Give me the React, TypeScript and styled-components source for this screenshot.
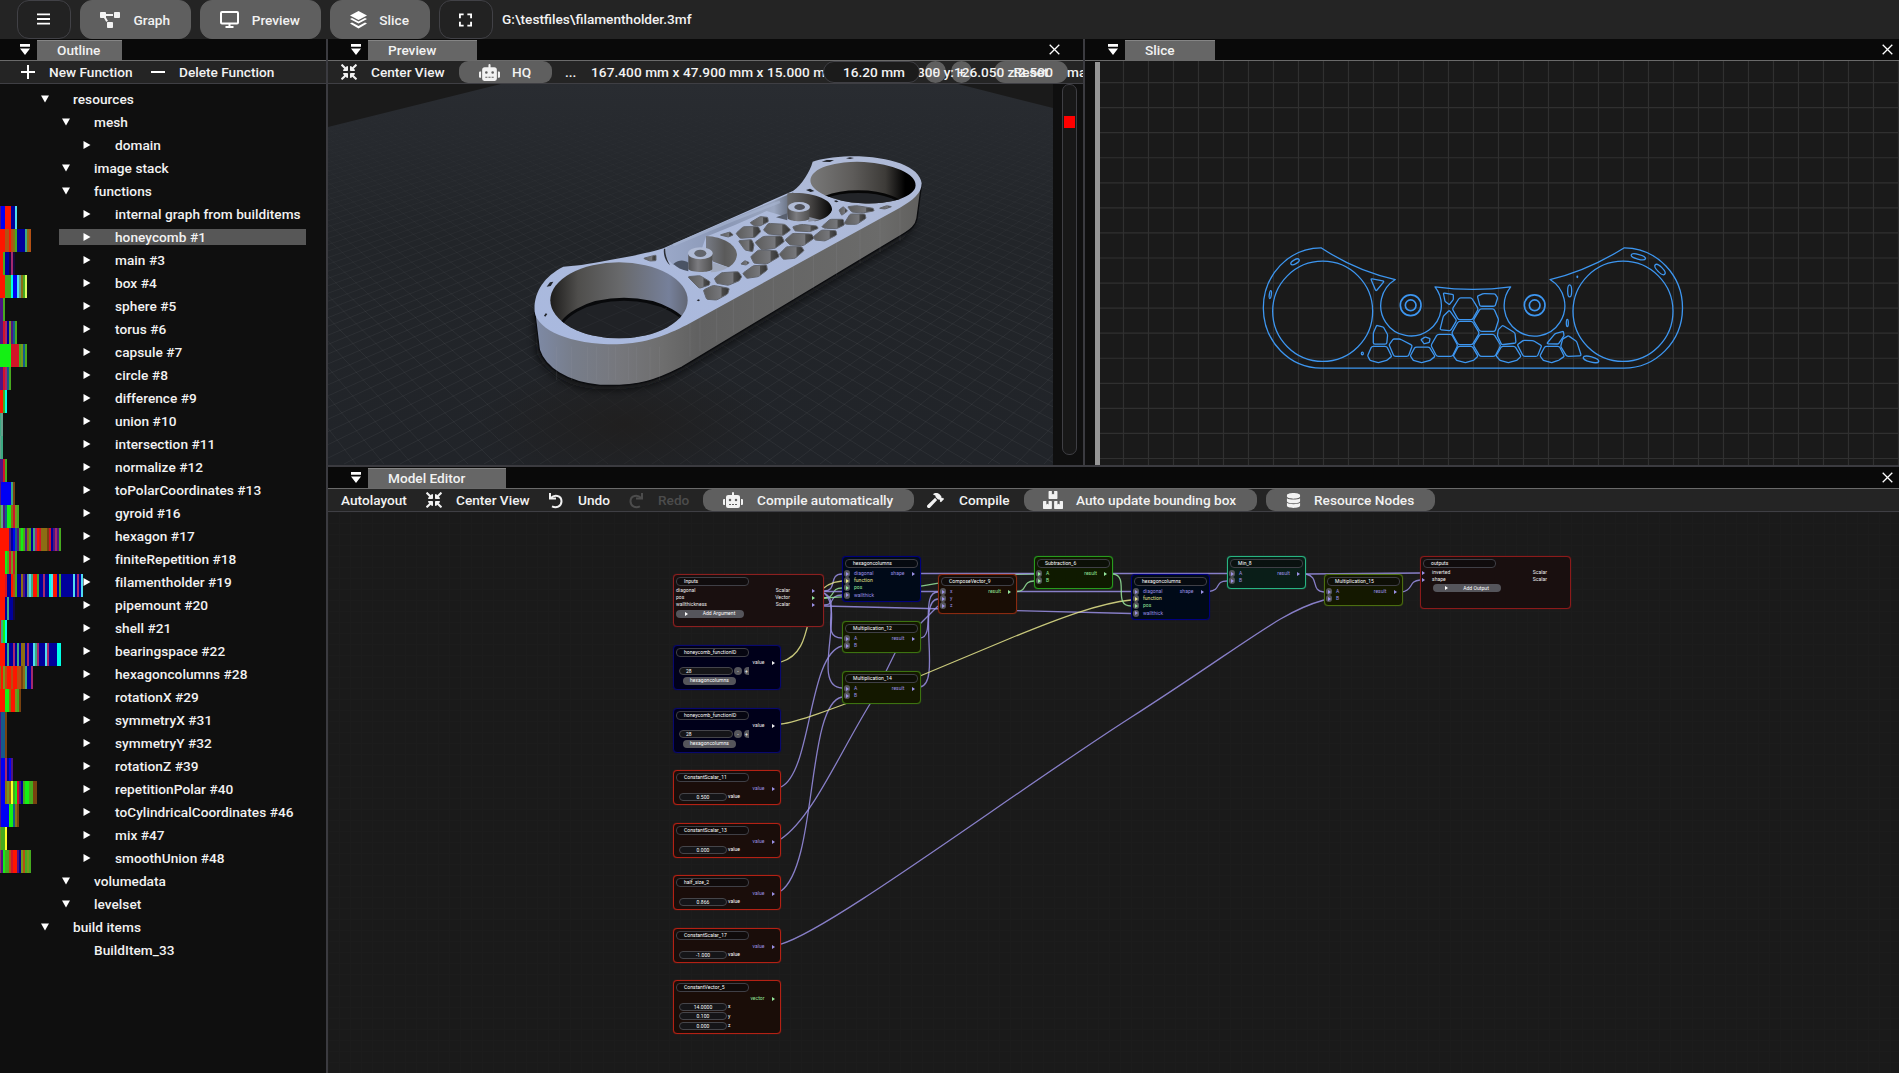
import React from 'react';
import styled, { createGlobalStyle } from 'styled-components';
import { FaRobot, FaHammer, FaBoxes, FaDatabase, FaCompressArrowsAlt, FaProjectDiagram } from 'react-icons/fa';

const GlobalStyle = createGlobalStyle`
  * { box-sizing: border-box; }
  body {
    margin: 0;
    background: #0f0f0f;
    color: #f2f2f2;
    font-family: Roboto, "Liberation Sans", sans-serif;
    font-size: 13.65px;
    font-weight: 500;
    letter-spacing: 0;
    overflow: hidden;
  }
`;

const App_ = styled.div`
  width: 1899px;
  height: 1073px;
  display: flex;
  flex-direction: column;
  overflow: hidden;
`;
const Header = styled.header`
  height: 39px;
  flex: none;
  display: flex;
  padding-left: 17px;
  gap: 9px;
  background: #242424;
`;
const HeaderButton = styled.button<{ $w: number; $filled?: boolean }>`
  width: ${p => p.$w}px;
  height: 39px;
  padding: 0 20px 0 19px;
  display: flex;
  align-items: center;
  justify-content: ${p => (p.$filled ? 'space-between' : 'center')};
  border: 1px solid ${p => (p.$filled ? '#5f5f5f' : '#414146')};
  border-radius: 12px;
  background: ${p => (p.$filled ? '#5f5f5f' : '#222')};
  color: #f2f2f2;
  font: inherit;
  letter-spacing: inherit;
`;
const FilePath = styled.span`
  line-height: 39px;
  white-space: nowrap;
`;
const Body = styled.div`
  flex: 1;
  min-height: 0;
  display: flex;
`;
const Sidebar = styled.aside`
  width: 328px;
  border-right: 2px solid #3b3b40;
  display: flex;
  flex-direction: column;
  background: #0f0f0f;
`;
const Main = styled.main`
  flex: 1;
  min-width: 0;
  display: flex;
  flex-direction: column;
`;
const TopPanels = styled.div`
  height: 428px;
  flex: none;
  display: flex;
  border-bottom: 2px solid #3b3b40;
`;
const Panel = styled.section<{ $w?: number; $split?: boolean }>`
  ${p => (p.$w ? `width: ${p.$w}px; flex: none;` : 'flex: 1; min-width: 0;')}
  min-height: 0;
  display: flex;
  flex-direction: column;
  border-right: ${p => (p.$split ? '2px solid #3b3b40' : 'none')};
`;
const TabBar = styled.div<{ $lead: number }>`
  height: 22px;
  flex: none;
  display: flex;
  align-items: flex-end;
  padding: 0 6px 0 ${p => p.$lead}px;
  background: #090909;
  border-bottom: 1px solid #6a6a6a;
`;
const DockIcon = styled.svg`
  width: 17px;
  height: 21px;
  flex: none;
  fill: #fff;
`;
const Tab = styled.div<{ $w: number }>`
  width: ${p => p.$w}px;
  height: 20px;
  padding-left: 20px;
  line-height: 19px;
  background: #666;
  border-top: 1px solid #858585;
`;
const TabClose = styled.svg<{ $inset?: number }>`
  width: 11px;
  height: 11px;
  margin: 0 ${p => p.$inset ?? 0}px 5px auto;
  stroke: #fff;
  stroke-width: 1.3;
`;
const Toolbar = styled.div`
  position: relative;
  height: 23px;
  flex: none;
  display: flex;
  align-items: center;
  background: #242424;
  border-bottom: 1px solid #3f3f44;
  white-space: nowrap;
  overflow: hidden;
`;
const ToolItem = styled.div<{ $w: number; $dim?: boolean; $pill?: boolean; $pad?: number; $gap?: number }>`
  width: ${p => p.$w}px;
  height: 22px;
  flex: none;
  display: flex;
  align-items: center;
  gap: ${p => p.$gap ?? 14}px;
  padding-left: ${p => p.$pad ?? 0}px;
  border-radius: 9px;
  background: ${p => (p.$pill ? '#5f5f5f' : 'transparent')};
  color: ${p => (p.$dim ? '#4c4c4c' : '#f2f2f2')};
  svg { flex: none; }
`;
const Dimensions = styled.span`
  letter-spacing: 0.06px;
`;
const Gap = styled.div<{ $w: number }>`
  width: ${p => p.$w}px;
  flex: none;
`;
const OverInput = styled.div`
  position: absolute;
  left: 495px;
  top: 0;
  width: 97px;
  height: 22px;
  z-index: 2;
  border: 1px solid #3f3f44;
  border-radius: 11px;
  background: #1b1b1b;
  line-height: 21px;
  padding-left: 19px;
`;
const OverPill = styled.div<{ $x: number; $w: number }>`
  position: absolute;
  left: ${p => p.$x}px;
  top: 0;
  width: ${p => p.$w}px;
  height: 22px;
  border-radius: 11px;
  background: #5f5f5f;
  line-height: 23px;
  text-align: center;
`;
const Coordinates = styled.div<{ $x: number }>`
  position: absolute;
  left: ${p => p.$x}px;
  line-height: 23px;
  z-index: 1;
`;
const Tree = styled.div`
  padding-top: 7px;
`;
const TreeRow = styled.div<{ $level: number }>`
  position: relative;
  height: 23px;
  padding: 0 20px 7px ${p => 38 + p.$level * 21}px;
`;
const TreeItem = styled.div<{ $selected?: boolean }>`
  height: 16px;
  margin-left: ${p => (p.$selected ? -21 : 0)}px;
  padding-left: ${p => (p.$selected ? 21 : 0)}px;
  display: flex;
  align-items: flex-start;
  line-height: 17px;
  letter-spacing: 0.04px;
  white-space: nowrap;
  background: ${p => (p.$selected ? '#575757' : 'transparent')};
`;
const Caret = styled.svg`
  width: 35px;
  height: 16px;
  flex: none;
  fill: #fff;
`;
const Signature = styled.div`
  position: absolute;
  left: -1px;
  top: 0;
  display: flex;
`;
const Stripe = styled.i<{ $c: string }>`
  width: 2px;
  height: 23px;
  background: ${p => p.$c};
`;
const PreviewBody = styled.div`
  flex: 1;
  min-height: 0;
  display: flex;
  background: #0f0f0f;
`;
const Scene = styled.svg`
  width: 725px;
  height: 381px;
  flex: none;
`;
const Slider = styled.div`
  width: 15px;
  height: 371px;
  margin-left: 9px;
  padding: 31px 1px 0;
  border: 1px solid #3f3f44;
  border-radius: 7px;
  background: #181818;
`;
const SliderThumb = styled.div`
  height: 12px;
  background: #f00;
`;
const SliceBody = styled.div`
  flex: 1;
  min-height: 0;
  display: flex;
  padding-left: 10px;
  background: #0f0f0f;
`;
const SliceEdge = styled.div`
  width: 5px;
  margin-top: 1px;
  background: #969696;
`;
const SliceView = styled.svg`
  flex: 1;
  height: 100%;
  background: #1a1a1a;
`;
const Canvas = styled.div`
  position: relative;
  flex: 1;
  overflow: hidden;
  background: #1a1a1a;
  background-image: linear-gradient(90deg, #1c1c1c 1px, transparent 1px), linear-gradient(#1c1c1c 1px, transparent 1px);
  background-size: 11px 11px;
`;
const Links = styled.svg`
  position: absolute;
  inset: 0;
  width: 1571px;
  height: 561px;
  fill: none;
  stroke-width: 1.3;
`;
const NodeBox = styled.div<{ $x: number; $y: number; $w: number; $h: number; $c: string; $bg: string }>`
  position: absolute;
  left: ${p => p.$x - 328}px;
  top: ${p => p.$y - 512}px;
  width: ${p => p.$w}px;
  height: ${p => p.$h}px;
  padding: 2px 2px 0;
  border: 1px solid ${p => p.$c};
  box-shadow: 0 0 1px ${p => p.$c};
  border-radius: 4px;
  background: ${p => p.$bg};
  font-size: 5px;
  font-weight: 400;
  line-height: 7px;
  letter-spacing: 0.05px;
  white-space: nowrap;
`;
const NodeTitle = styled.div<{ $w: number }>`
  width: ${p => p.$w}px;
  height: 9px;
  padding-left: 7px;
  border: 1px solid #3f3f46;
  border-radius: 4px;
  background: rgba(10, 10, 12, 0.6);
  color: #fff;
`;
const Port = styled.div<{ $c: string }>`
  display: flex;
  align-items: center;
  height: 7.2px;
  color: ${p => p.$c};
`;
const PortRows = styled.div<{ $top: number }>`
  margin-top: ${p => p.$top}px;
`;
const Pin = styled.span`
  width: 6px;
  height: 7px;
  margin: 0 4px 0 -1px;
  display: grid;
  place-items: center;
  border-radius: 3px;
  background: #55555a;
`;
const PinArrow = styled.span<{ $c: string }>`
  flex: none;
  border-left: 3px solid ${p => p.$c};
  border-top: 2px solid transparent;
  border-bottom: 2px solid transparent;
`;
const LeadArrow = styled(PinArrow)`
  margin: 0 7px 0 -1px;
`;
const PortOut = styled.span<{ $c: string; $right: number; $gap: number }>`
  margin-left: auto;
  margin-right: ${p => p.$right}px;
  display: flex;
  align-items: center;
  gap: ${p => p.$gap}px;
  color: ${p => p.$c};
`;
const NodeButton = styled.div<{ $x: number; $w: number }>`
  width: ${p => p.$w}px;
  height: 8px;
  margin: 1px 0 0 ${p => p.$x}px;
  display: flex;
  align-items: center;
  justify-content: center;
  gap: 15px;
  border-radius: 4px;
  background: #55555b;
  color: #fff;
`;
const FieldRow = styled.div`
  display: flex;
  align-items: center;
  height: 9.5px;
  padding-left: 3px;
  gap: 1px;
  color: #fff;
`;
const Field = styled.div<{ $w: number }>`
  width: ${p => p.$w}px;
  height: 8px;
  line-height: 6px;
  text-align: center;
  border: 1px solid #45454a;
  border-radius: 4px;
  background: #151518;
`;
const NarrowField = styled(Field)`
  text-align: left;
  padding-left: 6px;
`;
const Step = styled.span<{ $half?: boolean }>`
  width: ${p => (p.$half ? 5 : 8)}px;
  height: 8px;
  margin-left: ${p => (p.$half ? 1 : 0)}px;
  line-height: 8px;
  text-align: center;
  border-radius: ${p => (p.$half ? '4px 0 0 4px' : '4px')};
  background: #55555b;
`;

/* ---------- outline ---------- */

const palette: Record<string, string> = {
  r: '#ff1500', R: '#d21428', o: '#8c6e14', O: '#b45014', n: '#00009b', b: '#0000f5', p: '#501482',
  c: '#50dcf0', C: '#00ffe6', g: '#46aa1e', G: '#14f014', t: '#3caa82', m: '#a5286e', y: '#ffff28',
  Y: '#dcff64', l: '#78961e', w: '#78410f', k: '#64a08c', a: '#145a8c', d: '#140a3c',
};

type Item = [level: number, label: string, bars?: string];
const outline: Item[] = [
  [0, 'resources'], [1, 'mesh'], [2, 'domain'], [1, 'image stack'], [1, 'functions'],
  [2, 'internal graph from builditems', 'pbbrrrnnc'],
  [2, 'honeycomb #1', 'rrrOOrOognnnntoO'],
  [2, 'main #3', 'rrgnndmd'],
  [2, 'box #4', 'rrrgggCbbckogY'],
  [2, 'sphere #5', 'ppg'],
  [2, 'torus #6', 'ppRmnlpag'],
  [2, 'capsule #7', 'GGGGGGRRRRglag'],
  [2, 'circle #8', 'ppRmag'],
  [2, 'difference #9', 'rrgC'],
  [2, 'union #10', 'tk'],
  [2, 'intersection #11', 'kt'],
  [2, 'normalize #12', 'ppRg'],
  [2, 'toPolarCoordinates #13', 'pbbbbbtw'],
  [2, 'gyroid #16', 'gkpaGGoRlg'],
  [2, 'hexagon #17', 'rrrrrpnbapgGgpogntmrRooowRnpmpg'],
  [2, 'finiteRepetition #18', 'rrrGgRlRg'],
  [2, 'filamentholder #19', 'rrrRnnrOgnnopnkctrrgnnmnnCcrrngnnnnnncnmnc'],
  [2, 'pipemount #20', 'rrrntnnd'],
  [2, 'shell #21', 'RtGC'],
  [2, 'bearingspace #22', 'rrrntnnmntnoonmnnctmnnncmnnnnCC'],
  [2, 'hexagoncolumns #28', 'orlOrrOrrOOwotnnm'],
  [2, 'rotationX #29', 'rrrGGorrlgw'],
  [2, 'symmetryX #31', 'paaw'],
  [2, 'symmetryY #32', 'paaw'],
  [2, 'rotationZ #39', 'pbbmnbp'],
  [2, 'repetitionPolar #40', 'pbboloygGRpngGGggww'],
  [2, 'toCylindricalCoordinates #46', 'pbbbbGGaow'],
  [2, 'mix #47', 'lggy'],
  [2, 'smoothUnion #48', 'mpGggORrrpnlOglg'],
  [1, 'volumedata'], [1, 'levelset'], [0, 'build items'], [1, 'BuildItem_33'],
];

const OutlineRow = ({ item }: { item: Item }) => {
  const [level, label, bars] = item;
  const leaf = label === 'BuildItem_33';
  return (
    <TreeRow $level={level}>
      {bars && <Signature>{[...bars].map((b, i) => <Stripe key={i} $c={palette[b]} />)}</Signature>}
      <TreeItem $selected={label === 'honeycomb #1'}>
        <Caret viewBox="0 0 35 16">
          {!leaf && (level === 2 ? <path d="M3.500 4 10.500 8 3.500 12z" /> : <path d="M3 4.500H11L7 11.500z" />)}
        </Caret>
        {label}
      </TreeItem>
    </TreeRow>
  );
};

/* ---------- shared bits ---------- */

const Dock = () => (
  <DockIcon viewBox="0 0 17 21"><path d="M0 5h10v2.800H0zM0 9.500h10L5 16z" /></DockIcon>
);
const Close = ({ inset }: { inset?: number }) => (
  <TabClose $inset={inset} viewBox="0 0 11 11"><path d="M.7.7l9.600 9.600M10.300.7L.7 10.300" /></TabClose>
);
const UndoGlyph = ({ flip }: { flip?: boolean }) => (
  <svg width="16" height="17" viewBox="0 0 16 17" fill="none" stroke="currentColor" strokeWidth="2">
    <g transform={flip ? 'translate(16 0) scale(-1 1)' : undefined}>
      <path d="M2 1v5.500h6" />
      <path d="M3 6C6 2.500 13.500 2.800 13.500 9.300c0 5.500-5.500 7-9.500 5" />
    </g>
  </svg>
);

/* ---------- 3D preview ---------- */

const cells = [
  '563,440 600,437 630,455 628,465 598,475', '643,445 665,428 715,425 725,440 718,452 685,466 650,460',
  '610,480 640,466 688,475 683,492 650,510 620,508', '728,430 760,407 800,405 802,420 775,440 740,445',
  '752,380 775,360 830,362 838,380 800,402 762,400', '838,372 860,350 905,350 912,362 885,385 850,388',
  '715,332 755,329 762,345 758,365 735,360', '708,310 730,290 775,290 782,305 765,322 720,325',
  '765,337 790,319 845,318 853,335 825,355 785,360', '790,300 805,280 855,283 872,300 850,316 805,312',
  '855,330 878,310 935,312 942,325 910,347 870,345', '750,278 780,260 803,262 805,275 780,288 760,286',
  '878,290 905,283 950,288 955,295 930,305 885,303', '940,320 965,300 1008,302 1010,315 975,333 945,330',
  '965,290 990,268 1030,268 1033,285 1010,296 975,295', '1033,280 1050,252 1095,252 1098,265 1070,283 1040,283',
  '1043,230 1070,227 1120,235 1122,243 1085,249 1055,246', '1017,240 1030,230 1043,243 1025,256',
  '660,315 690,306 700,315 685,321', '722,402 735,392 748,398 738,405', '430,385 468,375 468,392 450,393',
  '1138,235 1160,227 1175,230 1155,237',
];
const slots = ['140,470 150,457 160,455 152,468', '132,557 137,550 142,552 136,560', '965,95 980,90 1002,90 990,96', '1038,85 1050,82 1062,84 1050,87', '918,180 930,176 943,183 932,186', '1002,213 1008,211 1016,215 1008,217', '590,511 596,508 600,511 595,514'];

const gridTicks = (from: number, to: number) => Array.from({ length: Math.ceil((to - from) / 28) }, (_, i) => from + i * 28);

/* Rounds a polygon's corners: each corner becomes a curve that starts and ends part of the way along its edges. */
const rounded = (points: string, t: number) => {
  const p = points.split(' ').map(s => s.split(',').map(Number));
  const mix = (a: number[], b: number[], k: number) => [a[0] + (b[0] - a[0]) * k, a[1] + (b[1] - a[1]) * k].map(v => v.toFixed(1)).join(' ');
  return p.map((c, i) => {
    const prev = p[(i + p.length - 1) % p.length];
    const next = p[(i + 1) % p.length];
    return `${i ? 'L' : 'M'}${mix(c, prev, t)}Q${c.join(' ')} ${mix(c, next, t)}`;
  }).join('') + 'z';
};

const PreviewScene = () => (
  <Scene viewBox="328 84 725 381" preserveAspectRatio="none">
    <defs>
      <linearGradient id="ground" x1="0" y1="0" x2="0" y2="1">
        <stop offset="0" stopColor="#292c31" /><stop offset=".4" stopColor="#222529" /><stop offset="1" stopColor="#212429" />
      </linearGradient>
      <linearGradient id="fade" x1="0" y1="84" x2="0" y2="320" gradientUnits="userSpaceOnUse">
        <stop offset="0" stopColor="#000" /><stop offset=".3" stopColor="#444" /><stop offset="1" stopColor="#fff" />
      </linearGradient>
      <mask id="far" maskUnits="userSpaceOnUse" x="328" y="84" width="725" height="381"><rect x="328" y="84" width="725" height="381" fill="url(#fade)" /></mask>
      <clipPath id="plane"><path d="M328 127L501 84H958L1053 108V465H328z" /></clipPath>
      <radialGradient id="warm"><stop offset="0" stopColor="#201f1f" /><stop offset="1" stopColor="#201f1f" stopOpacity="0" /></radialGradient>
      <linearGradient id="side" x1="104" y1="0" x2="1265" y2="0" gradientUnits="userSpaceOnUse">
        <stop offset="0" stopColor="#7e8aa6" /><stop offset=".1" stopColor="#777d8a" /><stop offset=".22" stopColor="#76777c" />
        <stop offset=".33" stopColor="#6e6e6e" /><stop offset=".42" stopColor="#616161" /><stop offset=".9" stopColor="#6b6b6a" /><stop offset="1" stopColor="#605f5d" />
      </linearGradient>
      <linearGradient id="top" x1="0" y1="1" x2="1" y2="0"><stop offset="0" stopColor="#a9b9df" /><stop offset="1" stopColor="#afbad6" /></linearGradient>
      <linearGradient id="wallL"><stop offset="0" stopColor="#1d1c1b" /><stop offset=".2" stopColor="#4f4e4c" /><stop offset=".5" stopColor="#68696b" /><stop offset=".85" stopColor="#76809a" /><stop offset="1" stopColor="#606470" /></linearGradient>
      <linearGradient id="wallR"><stop offset="0" stopColor="#7a7a7a" /><stop offset=".4" stopColor="#5e5c5a" /><stop offset=".7" stopColor="#3d3b38" /><stop offset=".88" stopColor="#000" /></linearGradient>
      <linearGradient id="cell"><stop offset="0" stopColor="#5c5c5c" /><stop offset=".68" stopColor="#76777b" /><stop offset=".72" stopColor="#4c4c4c" /><stop offset="1" stopColor="#333" /></linearGradient>
      <linearGradient id="pocket"><stop offset="0" stopColor="#777b85" /><stop offset=".6" stopColor="#5a5a5a" /><stop offset="1" stopColor="#686868" /></linearGradient>
      <linearGradient id="pocket2"><stop offset="0" stopColor="#68696c" /><stop offset=".5" stopColor="#484645" /><stop offset="1" stopColor="#050505" /></linearGradient>
      <linearGradient id="recess" x1="0" y1="0" x2="1" y2="0"><stop offset="0" stopColor="#9aa8c8" /><stop offset=".45" stopColor="#8a97b5" /><stop offset=".85" stopColor="#9aa6c0" /><stop offset="1" stopColor="#59616f" /></linearGradient>
      <linearGradient id="boss"><stop offset="0" stopColor="#505052" /><stop offset=".4" stopColor="#7c7c80" /><stop offset="1" stopColor="#505050" /></linearGradient>
      <clipPath id="holeL"><ellipse cx="357" cy="511" rx="206" ry="114" /></clipPath>
      <clipPath id="holeR"><ellipse cx="1089" cy="158" rx="158" ry="62" transform="rotate(3 1089 158)" /></clipPath>
      <filter id="soft"><feGaussianBlur stdDeviation="12" /></filter>
    </defs>
    <rect x="328" y="84" width="725" height="381" fill="#1a1a1a" />
    <g clipPath="url(#plane)">
      <rect x="328" y="84" width="725" height="381" fill="url(#ground)" />
      <g mask="url(#far)" stroke="#fff" strokeOpacity=".06" strokeWidth=".9">
        {gridTicks(-2400, 1300).map(x => <path key={`r${x}`} d={`M1657 -200L${x} 464`} />)}
        {gridTicks(300, 4000).map(x => <path key={`l${x}`} d={`M-166 -200L${x} 464`} />)}
      </g>
      <ellipse cx="625" cy="425" rx="150" ry="65" fill="url(#warm)" />
    </g>
    <g transform="translate(500 130) scale(.33333)">
      <path d="M104 545L110 670C150 750 230 780 320 778C430 780 490 755 560 715L1210 325 1255 270" fill="#0a0b0e" opacity=".75" filter="url(#soft)" />
      <path d="M104 545L118 660C135 712 200 758 300 766C420 770 470 750 545 712L1200 318C1235 298 1248 285 1251 265L1265 160" fill="url(#side)" stroke="#0b0c0f" strokeWidth="4" />
      <path d="M104 545C112 600 210 643 350 643C440 640 500 615 560 585L1200 233C1240 210 1265 190 1265 160C1260 110 1170 78 1050 79C1000 80 960 88 938 95C930 125 905 165 880 182L490 355C430 375 300 395 245 405L190 410C130 440 100 490 104 545z" fill="url(#top)" />
      <g stroke="#a0a4ac" strokeOpacity=".2" strokeWidth="2">
        {[170, 215, 262, 290, 325, 347, 385, 410, 450, 478].map(x => <path key={x} d={`M${x} 650V750`} />)}
        {[570, 600, 650, 700, 760, 820, 880, 940, 1010, 1080, 1140, 1200].map(x => <path key={x} d={`M${x} ${585 - (x - 560) * 0.55}v100`} />)}
      </g>
      <g clipPath="url(#holeL)">
        <rect x="150" y="390" width="420" height="250" fill="url(#wallL)" />
        <ellipse cx="372" cy="620" rx="200" ry="112" fill="#202226" stroke="#08090b" strokeWidth="9" />
        <g stroke="#2a2d32" strokeWidth="2"><path d="M210 610L420 520M270 640L500 535M350 650L540 560M260 550L440 640M340 525L520 610" /></g>
      </g>
      <g clipPath="url(#holeR)">
        <rect x="925" y="90" width="330" height="140" fill="url(#wallR)" />
        <ellipse cx="1075" cy="241" rx="142" ry="56" fill="#222428" stroke="#060606" strokeWidth="8" />
      </g>
      <path d="M500 352L880 187 862 262 800 243 705 285 618 320 590 400 520 405 495 380z" fill="url(#recess)" />
      <path d="M520 345L620 303 700 270 840 215" fill="none" stroke="#a9b6d2" strokeWidth="8" opacity=".6" />
      <path d="M520 402C540 386 555 392 565 398V424C545 420 530 412 520 402z" fill="#4a5364" />
      <path d="M492 356C489 375 497 394 510 406C500 388 495 372 496 356z" fill="#2a2d33" />
      <path d="M618 318C670 320 710 345 711 375C708 395 697 405 685 412L640 395 618 365z" fill="url(#pocket)" />
      <path d="M640 398L685 412C670 422 650 427 632 427z" fill="#a0a9bd" />
      <path d="M862 190C930 183 998 205 996 240C990 258 970 268 945 274L862 252z" fill="url(#pocket2)" />
      <path d="M925 260L962 270 925 275z" fill="#8b92a3" />
      <path d="M828 262L862 250V271z" fill="#59606e" />
      <path d="M565 370V418C575 428 627 430 637 418V370z" fill="url(#boss)" />
      <ellipse cx="601" cy="370" rx="37" ry="18" fill="#b0bbd5" /><ellipse cx="601" cy="370" rx="18" ry="11" fill="#62656c" />
      <path d="M863 232V266C875 275 917 277 928 266V232z" fill="url(#boss)" />
      <ellipse cx="897" cy="231" rx="33" ry="15" fill="#b0bbd5" /><ellipse cx="899" cy="231" rx="16" ry="9" fill="#50525a" />
      <g fill="url(#cell)" stroke="#62656c" strokeWidth="3">{cells.map(c => <path key={c} d={rounded(c, 0.12)} />)}</g>
      <g fill="#202329">{slots.map(c => <polygon key={c} points={c} />)}</g>
    </g>
  </Scene>
);

/* ---------- slice view ---------- */

const contours = [
  '658,205 695,205 715,238 697,270 655,270 637,238', '655,275 697,275 718,310 697,345 655,345 635,310',
  '720,238 762,238 776,270 765,305 720,305 700,272', '720,314 762,314 782,347 765,380 720,380 700,347',
  '592,314 635,314 653,347 637,380 590,380 573,347', '655,350 697,350 714,380 700,392 676,399 650,392 640,378',
  '525,352 568,352 585,380 570,392 545,399 520,392 511,378', '395,350 440,350 455,380 440,392 415,399 390,392 383,378',
  '447,345 460,328 480,328 517,347 505,380 462,380', '785,350 825,350 843,380 830,392 805,399 780,392 768,378',
  '832,345 850,332 880,333 905,348 892,380 850,380', '915,350 958,350 973,380 955,392 935,399 910,392 900,378',
  '968,328 985,318 1010,335 1024,378 980,380 962,350', '920,342 945,312 970,305 972,318 955,343',
  '775,300 788,287 825,310 828,340 785,345 772,318', '400,310 410,287 430,292 443,315 440,343 400,343',
  '600,300 610,260 628,242 650,272 632,303', '610,190 640,195 640,210 628,225 615,215',
  '712,200 730,192 765,193 773,205 765,230 720,230', '392,147 433,155 408,185', '543,330 555,322 570,327 568,338 552,342',
];
const slits: number[][] = [[165, 97, 14, 6, -30], [91, 195, 3, 12, 8], [1195, 82, 22, 7, 15], [1260, 120, 20, 8, 45], [989, 184, 6, 18, 0], [982, 280, 3, 11, 0], [1053, 389, 24, 8, 15], [367, 371, 3, 4, 0], [1012, 142, 1, 2, 0]];

const SliceScene = () => (
  <SliceView viewBox="1100 62 799 403" preserveAspectRatio="none">
    <g stroke="#303030" strokeWidth="1.200">
      {Array.from({ length: 32 }, (_, i) => <path key={i} d={`M${1123.5 + i * 25} 61V465`} />)}
      {Array.from({ length: 16 }, (_, i) => <path key={i} d={`M1100 ${83.5 + i * 25}H1899`} />)}
    </g>
    <g transform="translate(1240 230) scale(.33333)" fill="none" stroke="#3d96f0" strokeWidth="3.900" strokeLinejoin="round">
      <path d="M243 55A174 180 0 0 0 245 415H1150A176 180 0 0 0 1153 55Q1040 125 930 150A91 91 0 1 1 812 172Q700 187 585 172A91 91 0 1 1 466 150Q350 125 243 55z" />
      <circle cx="248" cy="245" r="150" /><circle cx="1149" cy="245" r="150" />
      {[512, 884].map(x => <g key={x} strokeWidth="5"><circle cx={x} cy="227" r="31" /><circle cx={x} cy="227" r="16" /></g>)}
      {contours.map(c => <path key={c} d={rounded(c, 0.12)} />)}
      {slits.map(([x, y, a, b, r]) => <ellipse key={x} cx={x} cy={y} rx={a} ry={b} transform={`rotate(${r} ${x} ${y})`} />)}
    </g>
  </SliceView>
);

/* ---------- node graph ---------- */

const V = '#9b91e6';
const W = '#eee';
const GR = '#96e69b';
const YE = '#e6e68c';
type P = { in?: string; out?: string; ci?: string; co?: string; arrow?: string; pin?: boolean; lead?: boolean; noArrow?: boolean };
interface NodeProps {
  x: number; y: number; w: number; h: number; c: string; bg: string; title: string; tw?: number;
  ports?: P[]; top?: number; right?: number; gap?: number; button?: [number, number, string]; children?: React.ReactNode;
}
const GraphNode = ({ x, y, w, h, c, bg, title, tw = 73, ports = [], top = 2, right = 3, gap = 7, button, children }: NodeProps) => (
  <NodeBox $x={x} $y={y} $w={w} $h={h} $c={c} $bg={bg}>
    <NodeTitle $w={tw}>{title}</NodeTitle>
    <PortRows $top={top}>
      {ports.map((p, i) => (
        <Port key={i} $c={p.ci ?? V}>
          {p.pin && <Pin><PinArrow $c={p.ci ?? V} /></Pin>}
          {p.lead && <LeadArrow $c={V} />}
          {p.in}
          {p.out && <PortOut $c={p.co ?? V} $right={right} $gap={gap}>{p.out}{!p.noArrow && <PinArrow $c={p.arrow ?? p.co ?? V} />}</PortOut>}
        </Port>
      ))}
    </PortRows>
    {button && <NodeButton $x={button[0]} $w={button[1]}><PinArrow $c="#fff" />{button[2]}</NodeButton>}
    {children}
  </NodeBox>
);

const hexPorts: P[] = [
  { in: 'diagonal', pin: true, out: 'shape' }, { in: 'function', pin: true, ci: YE }, { in: 'pos', pin: true, ci: GR }, { in: 'wallthick', pin: true },
];
const abPorts = (ci = V): P[] => [{ in: 'A', pin: true, out: 'result', ci, co: ci }, { in: 'B', pin: true, ci }];

const Constant = ({ y, title, value }: { y: number; title: string; value: string }) => (
  <GraphNode x={673} y={y} w={107.5} h={35} c="#b42114" bg="#1a0d0a" title={title} ports={[{ out: 'value' }]} top={3}>
    <FieldRow><Field $w={48}>{value}</Field>value</FieldRow>
  </GraphNode>
);
const FunctionNode = ({ y }: { y: number }) => (
  <GraphNode x={673} y={y} w={107.5} h={45} c="#08086e" bg="#00001a" title="honeycomb_functionID" ports={[{ out: 'value', co: W }]}>
    <FieldRow><NarrowField $w={54}>28</NarrowField><Step>-</Step><Step $half>+</Step></FieldRow>
    <NodeButton $x={7} $w={53}>hexagoncolumns</NodeButton>
  </GraphNode>
);

const links: [string, string][] = [
  [V, 'M824 591C838 591 828 574 842 574'],
  [GR, 'M824 598C836 598 830 588 842 588'],
  [V, 'M824 605C836 605 828 595 842 595'],
  [YE, 'M781 662C822 650 795 585 842 581'],
  [V, 'M824 591.500H1131'],
  [V, 'M824 606L1131 613.500'],
  [GR, 'M824 598C890 596 960 574 1034 574'],
  [V, 'M824 593C842 600 818 638 842 638'],
  [V, 'M824 593C846 610 810 687 842 688'],
  [V, 'M920 638C936 638 920 592 938 592'],
  [V, 'M920 687C942 684 916 600 938 599'],
  [V, 'M781 839C812 818 838 756 870 704L895 653 920 624Q928 616 938 606'],
  [V, 'M781 787C812 772 808 654 842 646'],
  [V, 'M781 891C818 864 806 704 842 697'],
  [V, 'M781 944C830 930 1010 795 1130 718S1280 612 1324 600'],
  [YE, 'M781 724C800 722 850 702 920 676L1011 638C1060 618 1100 603 1131 600'],
  [V, 'M920 573.500H1227'],
  [GR, 'M1017 591.500C1028 591 1022 581 1034 581'],
  [GR, 'M1113 574C1130 576 1112 606 1131 606'],
  [V, 'M1209 591.500C1222 590 1214 581 1227 581'],
  [V, 'M1306 574L1420 573'],
  [V, 'M1306 574C1320 577 1310 591 1324 592'],
  [V, 'M1402 592C1414 590 1408 581 1420 580'],
];

const Graph = () => (
  <Canvas>
    <Links viewBox="328 512 1571 561">
      {links.map(([c, d]) => <path key={d} d={d} stroke={c} strokeOpacity=".85" />)}
    </Links>
    <GraphNode x={673} y={574} w={151} h={53} c="#8c1f1f" bg="#190f0f" title="Inputs" top={1} right={6} gap={22} button={[0, 68, 'Add Argument']}
      ports={[{ in: 'diagonal', out: 'Scalar', ci: W, co: W, arrow: V }, { in: 'pos', out: 'Vector', ci: W, co: W, arrow: GR }, { in: 'wallthickness', out: 'Scalar', ci: W, co: W, arrow: V }]} />
    <FunctionNode y={645} />
    <FunctionNode y={708} />
    <Constant y={770} title="ConstantScalar_11" value="0.500" />
    <Constant y={823} title="ConstantScalar_13" value="0.000" />
    <Constant y={875} title="half_size_2" value="0.866" />
    <Constant y={928} title="ConstantScalar_17" value="-1.000" />
    <GraphNode x={673} y={980} w={107.5} h={54} c="#b42114" bg="#1a0d08" title="ConstantVector_5" ports={[{ out: 'vector', co: GR }]} top={3}>
      <FieldRow><Field $w={48}>14.0000</Field>x</FieldRow>
      <FieldRow><Field $w={48}>0.100</Field>y</FieldRow>
      <FieldRow><Field $w={48}>0.000</Field>z</FieldRow>
    </GraphNode>
    <GraphNode x={842} y={556} w={78.5} h={46} c="#00007d" bg="#000a18" title="hexagoncolumns" ports={hexPorts} />
    <GraphNode x={842} y={621} w={78.5} h={32} c="#3c7310" bg="#141800" title="Multiplication_12" ports={abPorts()} />
    <GraphNode x={842} y={671} w={78.5} h={33} c="#3c7310" bg="#141800" title="Multiplication_14" ports={abPorts()} />
    <GraphNode x={938} y={574} w={79} h={40} c="#8a2a10" bg="#190d05" title="ComposeVector_9"
      ports={[{ in: 'x', pin: true, out: 'result', co: GR }, { in: 'y', pin: true }, { in: 'z', pin: true }]} />
    <GraphNode x={1034} y={556} w={79} h={33} c="#289b1e" bg="#0f1a00" title="Subtraction_6" ports={abPorts(GR)} />
    <GraphNode x={1131} y={574} w={78.5} h={46} c="#00007d" bg="#000a18" title="hexagoncolumns" ports={hexPorts} />
    <GraphNode x={1227} y={556} w={79} h={33} c="#28b482" bg="#0a1e18" title="Min_8" ports={abPorts()} />
    <GraphNode x={1324} y={574} w={78.5} h={32} c="#4b6e10" bg="#141800" title="Multiplication_15" ports={abPorts()} />
    <GraphNode x={1420} y={556} w={151} h={53} c="#8c1a1a" bg="#190f0f" title="outputs" top={1} right={21} gap={0} button={[10, 68, 'Add Output']}
      ports={[{ in: 'inverted', lead: true, out: 'Scalar', ci: W, co: W, noArrow: true }, { in: 'shape', lead: true, out: 'Scalar', ci: W, co: W, noArrow: true }]} />
  </Canvas>
);

export default function App() {
  return (
    <App_>
      <GlobalStyle />
      <Header>
        <HeaderButton $w={54}>
          <svg width="14" height="13" viewBox="0 0 14 13" fill="#fff"><path d="M0 0h14v2H0zM0 5h14v2H0zM0 10h14v2H0z" /></svg>
        </HeaderButton>
        <HeaderButton $w={111} $filled><FaProjectDiagram size={20} />Graph</HeaderButton>
        <HeaderButton $w={121} $filled>
          <svg width="19" height="17" viewBox="0 0 19 17" fill="none" stroke="#fff" strokeWidth="2"><rect x="1" y="1" width="17" height="11.500" rx="1" /><path d="M5.500 16h8M9.500 13v3" /></svg>
          Preview
        </HeaderButton>
        <HeaderButton $w={100} $filled>
          <svg width="17" height="18" viewBox="0 0 17 18" fill="#fff"><path d="M8.500 0L17 4.500 8.500 9 0 4.500zM0 8l2-1 6.500 3.500L15 7l2 1-8.500 4.600zM0 12.500l2-1L8.500 15l6.500-3.500 2 1L8.500 17.500z" /></svg>
          Slice
        </HeaderButton>
        <HeaderButton $w={54}>
          <svg width="14" height="14" viewBox="0 0 14 14" fill="none" stroke="#fff" strokeWidth="2"><path d="M1 5V1h4M9 1h4v4M13 9v4H9M5 13H1V9" /></svg>
        </HeaderButton>
        <FilePath>G:\testfiles\filamentholder.3mf</FilePath>
      </Header>
      <Body>
        <Sidebar>
          <TabBar $lead={20}><Dock /><Tab $w={85}>Outline</Tab></TabBar>
          <Toolbar>
            <Gap $w={21} />
            <ToolItem $w={130}>
              <svg width="14" height="14" viewBox="0 0 14 14" fill="#fff"><path d="M6 0h2v6h6v2H8v6H6V8H0V6h6z" /></svg>
              New Function
            </ToolItem>
            <ToolItem $w={140}>
              <svg width="14" height="14" viewBox="0 0 14 14" fill="#fff"><path d="M0 6h14v2H0z" /></svg>
              Delete Function
            </ToolItem>
          </Toolbar>
          <Tree>{outline.map(i => <OutlineRow key={i[1]} item={i} />)}</Tree>
        </Sidebar>
        <Main>
          <TopPanels>
            <Panel $w={757} $split>
              <TabBar $lead={23}><Dock /><Tab $w={109}>Preview</Tab><Close inset={17} /></TabBar>
              <Toolbar>
                <Gap $w={13} />
                <ToolItem $w={118}><FaCompressArrowsAlt size={16} />Center View</ToolItem>
                <ToolItem $w={93} $pill $pad={20} $gap={12}><FaRobot size={21} />HQ</ToolItem>
                <Gap $w={13} />
                <ToolItem $w={26}>...</ToolItem>
                <Dimensions>167.400 mm x 47.900 mm x 15.000 mm</Dimensions>
                <OverInput>16.20 mm</OverInput>
                <OverPill $x={597} $w={21}>-</OverPill>
                <OverPill $x={623} $w={21}>+</OverPill>
                <OverPill $x={666} $w={74}>Reset</OverPill>
                <Coordinates $x={589}>800 y:126.050 z:2.500</Coordinates>
                <Coordinates $x={739}>max</Coordinates>
              </Toolbar>
              <PreviewBody>
                <PreviewScene />
                <Slider><SliderThumb /></Slider>
              </PreviewBody>
            </Panel>
            <Panel>
              <TabBar $lead={23}><Dock /><Tab $w={90}>Slice</Tab><Close /></TabBar>
              <SliceBody><SliceEdge /><SliceScene /></SliceBody>
            </Panel>
          </TopPanels>
          <Panel>
            <TabBar $lead={23}><Dock /><Tab $w={138}>Model Editor</Tab><Close /></TabBar>
            <Toolbar>
              <Gap $w={13} />
              <ToolItem $w={85}>Autolayout</ToolItem>
              <ToolItem $w={122}><FaCompressArrowsAlt size={16} />Center View</ToolItem>
              <ToolItem $w={80}><UndoGlyph />Undo</ToolItem>
              <ToolItem $w={75} $dim><UndoGlyph flip />Redo</ToolItem>
              <ToolItem $w={211} $pill $pad={20} $gap={14}><FaRobot size={20} />Compile automatically</ToolItem>
              <Gap $w={13} />
              <ToolItem $w={97} $gap={15}><FaHammer size={17} />Compile</ToolItem>
              <ToolItem $w={233} $pill $pad={19} $gap={13}><FaBoxes size={20} />Auto update bounding box</ToolItem>
              <Gap $w={9} />
              <ToolItem $w={169} $pill $pad={20} $gap={13}><FaDatabase size={15} />Resource Nodes</ToolItem>
            </Toolbar>
            <Graph />
          </Panel>
        </Main>
      </Body>
    </App_>
  );
}
